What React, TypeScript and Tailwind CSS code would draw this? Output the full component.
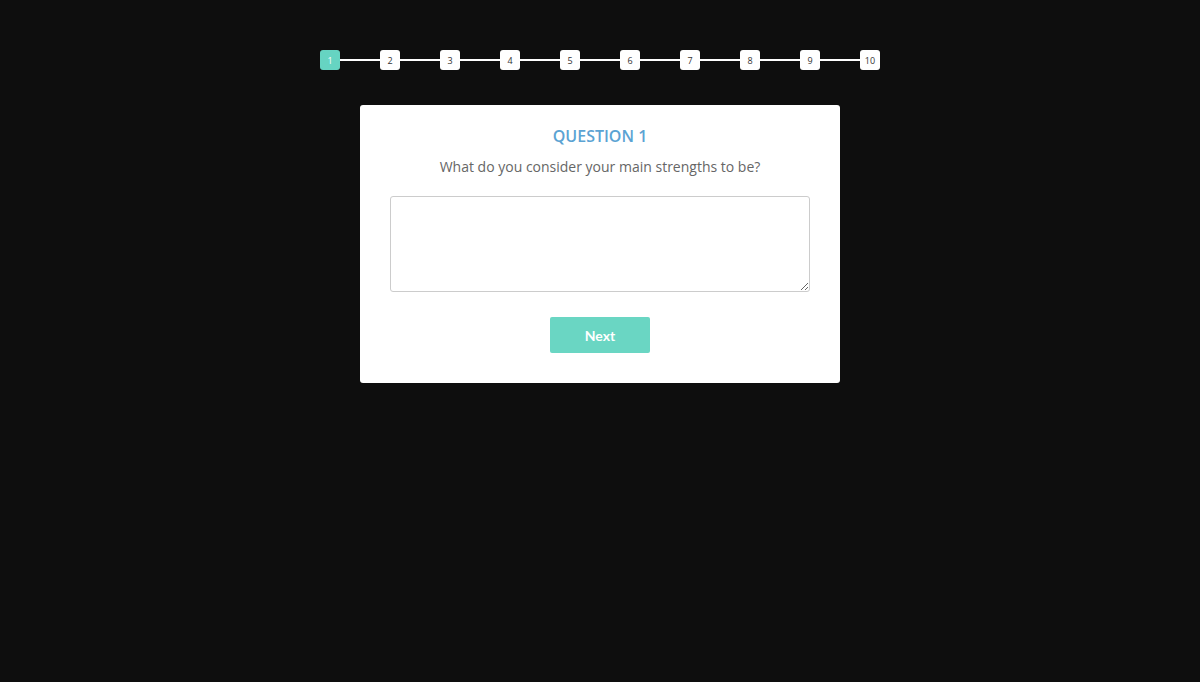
import React from 'react';

const steps = [1, 2, 3, 4, 5, 6, 7, 8, 9, 10];

export default function App() {
  const current = 1;

  return (
    <div className="min-h-[682px] w-full bg-[#0e0e0e] flex flex-col items-center pt-[50px]" style={{ fontFamily: '"Open Sans", sans-serif' }}>
      <div className="flex items-center w-[560px]">
        {steps.map((n, i) => (
          <React.Fragment key={n}>
            {i > 0 && <div className="flex-1 h-[2px] bg-white" />}
            <div
              className={`w-5 h-5 rounded-[3px] flex items-center justify-center text-[9px] leading-none ${
                n === current ? 'bg-[#66d4c2] text-white' : 'bg-white text-[#333]'
              }`}
            >
              {n}
            </div>
          </React.Fragment>
        ))}
      </div>

      <div className="mt-[35px] w-[480px] bg-white rounded-[3px] px-[30px] pt-[20px] pb-[30px] flex flex-col items-center">
        <h2 className="text-[16px] font-semibold text-[#5ba3d3] leading-[22px]">QUESTION 1</h2>
        <p className="mt-[10px] text-[14px] text-[#666] leading-[20px]">What do you consider your main strengths to be?</p>
        <textarea className="mt-[19px] w-full h-[96px] border border-[#ccc] rounded-[3px] outline-none p-2 text-sm" />
        <button className="mt-[25px] w-[100px] h-[36px] bg-[#6ad6c3] rounded-[2px] text-white text-[14px] font-bold" style={{ fontFamily: 'Lato, sans-serif' }}>
          Next
        </button>
      </div>
    </div>
  );
}
